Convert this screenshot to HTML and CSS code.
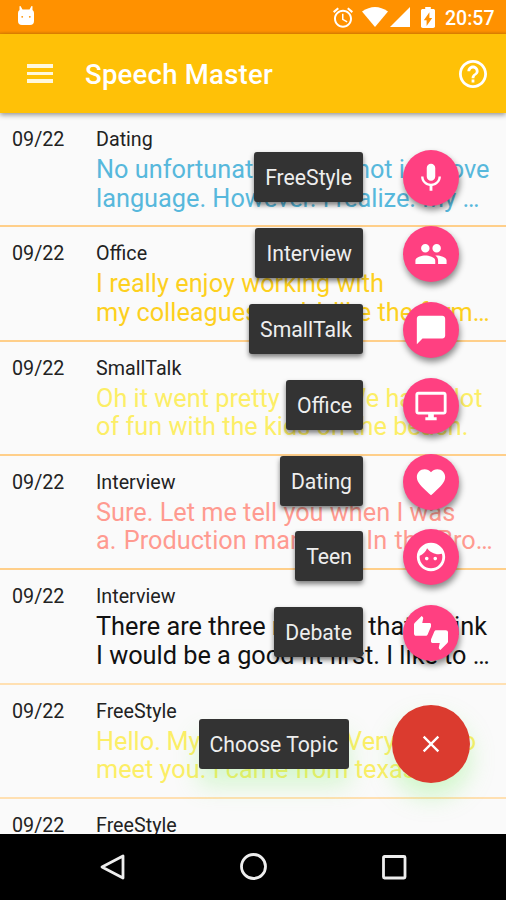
FILE: index.html
```html
<!DOCTYPE html>
<html lang="en">
<head>
<meta charset="utf-8">
<title>Speech Master</title>
<link rel="stylesheet" href="styles.css">
</head>
<body>
<div class="screen">
  <header class="status">
    <svg class="cat" viewBox="0 0 18 20"><path fill="#fff" d="M3.500 0 5.500 3.500h7L14.500 0l1 .3V4q1.500 1 1.500 3v8q0 4-4 4H5q-4 0-4-4V7q0-2 1.500-3V.3z"/><circle cx="5.200" cy="10.800" r=".9" fill="#ff9100"/><circle cx="12.800" cy="10.800" r=".9" fill="#ff9100"/></svg>
    <div class="status-icons">
      <svg class="alarm" viewBox="2 1.7 20 20.3"><path fill="#fff" d="M22 5.72l-4.6-3.86-1.29 1.53 4.6 3.86L22 5.72zM7.88 3.39L6.6 1.86 2 5.71l1.29 1.53 4.59-3.85zM12.5 8H11v6l4.75 2.85.75-1.23-4-2.37V8zM12 4c-4.97 0-9 4.03-9 9s4.02 9 9 9c4.97 0 9-4.03 9-9s-4.03-9-9-9zm0 16c-3.87 0-7-3.13-7-7s3.13-7 7-7 7 3.13 7 7-3.13 7-7 7z"/></svg>
      <svg class="wifi" viewBox="0 0 26 20"><path fill="#fff" d="M0 4.500Q13-4.500 26 4.500L13 20z"/></svg>
      <svg class="signal" viewBox="0 0 20 20"><path fill="#fff" d="M20 0v20H0z"/></svg>
      <svg class="battery" viewBox="7 2 10 20" preserveAspectRatio="none"><path fill="#fff" fill-rule="evenodd" d="M15.670 4H14V2h-4v2H8.330C7.600 4 7 4.600 7 5.330v15.330C7 21.400 7.600 22 8.330 22h7.330c.740 0 1.340-.600 1.340-1.330V5.330C17 4.600 16.400 4 15.670 4zM11 20v-5.500H9L13 7v5.500h2L11 20z"/></svg>
      <span class="clock">20:57</span>
    </div>
  </header>
  <nav class="toolbar">
    <div class="burger"><i></i><i></i><i></i></div>
    <h1>Speech Master</h1>
    <svg class="help" viewBox="2 2 20 20"><path fill="#fff" d="M11 18h2v-2h-2v2zm1-16C6.480 2 2 6.480 2 12s4.480 10 10 10 10-4.480 10-10S17.520 2 12 2zm0 18c-4.410 0-8-3.590-8-8s3.590-8 8-8 8 3.590 8 8-3.590 8-8 8zm0-14c-2.210 0-4 1.790-4 4h2c0-1.100.900-2 2-2s2 .900 2 2c0 2-3 1.750-3 5h2c0-2.250 3-2.500 3-5 0-2.210-1.790-4-4-4z"/></svg>
  </nav>
  <main class="list">
    <article class="row"><time>09/22</time><div><h2>Dating</h2><p class="blue"><span>No unfortunately, <em>I did </em>not improve</span><span>language. However. I realize. My …</span></p></div></article>
    <article class="row"><time>09/22</time><div><h2>Office</h2><p class="gold"><span>I really enjoy working with</span><span>my colleagues <em>and I </em>like the farm…</span></p></div></article>
    <article class="row"><time>09/22</time><div><h2>SmallTalk</h2><p class="yellow"><span>Oh it went pretty well. We had a lot</span><span>of fun with the kids on the beach.</span></p></div></article>
    <article class="row"><time>09/22</time><div><h2>Interview</h2><p class="coral"><span>Sure. Let me tell you when I was</span><span class="loose">a. Production manager. In the Bro…</span></p></div></article>
    <article class="row"><time>09/22</time><div><h2>Interview</h2><p class="dark"><span>There are three reasons that I think</span><span>I would be a good fit first. I like to …</span></p></div></article>
    <article class="row"><time>09/22</time><div><h2>FreeStyle</h2><p class="yellow"><span class="tight">Hello. My name is Jin. Very nice to</span><span>meet you. I came from texas.</span></p></div></article>
    <article class="row"><time>09/22</time><div><h2>FreeStyle</h2></div></article>
  </main>
  <aside class="menu">
    <div class="action"><span class="label">FreeStyle</span><button class="mini"><svg viewBox="0 0 24 24"><path d="M12 14c1.660 0 3-1.340 3-3V5c0-1.660-1.340-3-3-3S9 3.340 9 5v6c0 1.660 1.340 3 3 3zm5.300-3c0 3-2.540 5.100-5.300 5.100S6.700 14 6.700 11H5c0 3.410 2.720 6.230 6 6.720V21h2v-3.280c3.280-.480 6-3.300 6-6.720h-1.700z"/></svg></button></div>
    <div class="action"><span class="label">Interview</span><button class="mini"><svg viewBox="0 0 24 24"><path d="M16 11c1.660 0 2.990-1.340 2.990-3S17.660 5 16 5s-3 1.340-3 3 1.340 3 3 3zm-8 0c1.660 0 2.990-1.340 2.990-3S9.660 5 8 5 5 6.340 5 8s1.340 3 3 3zm0 2c-2.330 0-7 1.170-7 3.500V19h14v-2.500C15 14.170 10.330 13 8 13zm8 0c-.290 0-.620.020-.970.050 1.160.840 1.970 1.970 1.970 3.450V19h6v-2.500c0-2.330-4.670-3.500-7-3.500z"/></svg></button></div>
    <div class="action"><span class="label">SmallTalk</span><button class="mini"><svg viewBox="0 0 24 24"><path d="M20 2H4c-1.100 0-1.990.900-1.990 2L2 22l4-4h14c1.100 0 2-.900 2-2V4c0-1.100-.900-2-2-2z"/></svg></button></div>
    <div class="action"><span class="label">Office</span><button class="mini"><svg viewBox="0 0 24 24"><path d="M21 2H3c-1.100 0-2 .900-2 2v12c0 1.100.900 2 2 2h7v2H8v2h8v-2h-2v-2h7c1.100 0 2-.900 2-2V4c0-1.100-.900-2-2-2zm0 14H3V4h18v12z"/></svg></button></div>
    <div class="action"><span class="label">Dating</span><button class="mini"><svg viewBox="0 0 24 24"><path d="M12 21.350l-1.450-1.320C5.400 15.360 2 12.280 2 8.500 2 5.420 4.420 3 7.500 3c1.740 0 3.410.810 4.500 2.090C13.090 3.810 14.760 3 16.500 3 19.580 3 22 5.420 22 8.500c0 3.780-3.400 6.860-8.550 11.540L12 21.350z"/></svg></button></div>
    <div class="action"><span class="label">Teen</span><button class="mini"><svg viewBox="0 0 24 24"><path d="M9 11.750c-.690 0-1.250.560-1.250 1.250s.560 1.250 1.250 1.250 1.250-.560 1.250-1.250-.560-1.250-1.250-1.250zm6 0c-.690 0-1.250.560-1.250 1.250s.560 1.250 1.250 1.250 1.250-.560 1.250-1.250-.560-1.250-1.250-1.250zM12 2C6.480 2 2 6.480 2 12s4.480 10 10 10 10-4.480 10-10S17.520 2 12 2zm0 18c-4.410 0-8-3.590-8-8 0-.290.020-.580.050-.860 2.360-1.050 4.230-2.980 5.210-5.370C11.070 8.330 14.050 10 17.420 10c.780 0 1.530-.090 2.250-.260.210.710.330 1.470.330 2.260 0 4.410-3.590 8-8 8z"/></svg></button></div>
    <div class="action"><span class="label">Debate</span><button class="mini"><svg viewBox="0 0 24 24"><path d="M12 6c0-.550-.450-1-1-1H5.820l.660-3.180.020-.230c0-.310-.130-.590-.330-.800L5.380 0 .440 4.940C.170 5.210 0 5.590 0 6v6.500c0 .830.670 1.500 1.500 1.500h6.750c.620 0 1.150-.380 1.380-.910l2.260-5.290c.070-.170.110-.360.110-.550V6zm10.500 4h-6.750c-.620 0-1.150.380-1.380.910l-2.260 5.290c-.070.170-.110.360-.110.550V18c0 .550.450 1 1 1h5.180l-.660 3.180-.020.240c0 .310.130.590.330.800l.790.780 4.940-4.940c.270-.270.440-.650.440-1.060v-6.500c0-.830-.670-1.500-1.500-1.500z"/></svg></button></div>
    <div class="action main"><span class="label">Choose Topic</span><button class="close"><svg viewBox="0 0 24 24"><path d="M19 6.410L17.590 5 12 10.590 6.410 5 5 6.410 10.590 12 5 17.590 6.410 19 12 13.410 17.590 19 19 17.590 13.410 12z"/></svg></button></div>
  </aside>
  <footer class="navbar">
    <svg viewBox="0 0 28 28"><path d="M25 2v22L4 13z"/></svg>
    <svg viewBox="0 0 28 28"><circle cx="14.500" cy="12.500" r="12"/></svg>
    <svg viewBox="0 0 28 28"><rect x="3.500" y="2.500" width="21.500" height="21.500" rx="1"/></svg>
  </footer>
</div>
</body>
</html>
```
FILE: styles.css
```css
* { box-sizing: border-box; }
body { margin: 0; font-family: Roboto, "Liberation Sans", sans-serif; background: #fafafa; }
.screen { position: relative; display: flex; flex-direction: column; width: 506px; height: 900px; overflow: hidden; }
h1, h2, p { margin: 0; font-weight: 400; }
svg { display: block; flex: none; overflow: visible; }

.status { flex: none; height: 34px; background: linear-gradient(#ff9100 31px, #e78400); display: flex; justify-content: space-between; padding: 6px 11px 0 17px; }
.cat { width: 18px; height: 20px; }
.status-icons { display: flex; height: 22px; align-items: center; }
.alarm { width: 20px; height: 21px; margin-right: 9px; }
.wifi { width: 26px; height: 20px; margin-right: 2px; }
.signal { width: 20px; height: 20px; margin-right: 11px; }
.battery { width: 14px; height: 21px; margin-right: 10px; }
.clock { width: 50px; font-size: 19.500px; font-weight: 500; line-height: 24px; color: #fff; padding-top: 3px; }

.toolbar { flex: none; height: 79px; background: #ffc107; display: flex; align-items: center; padding: 0 19px 0 27px; box-shadow: 0 2px 5px rgba(0, 0, 0, .4); position: relative; color: #fff; }
.burger { width: 26px; display: grid; gap: 4px; }
.burger i { height: 3.500px; background: #fff8de; }
.toolbar h1 { margin-left: 32px; flex: 1; font-size: 27.500px; letter-spacing: .25px; font-weight: 500; line-height: 34px; padding-top: 3px; }
.help { width: 28px; height: 28px; }

.list { flex: none; height: 721px; overflow: hidden; }
.row { height: 114.330px; border-bottom: 2px solid #ffcf8a; display: flex; padding: 14px 0 0 12px; }
.row:nth-child(n+5) { border-color: #ffe0b2; }
.row time { width: 84px; font-size: 19.700px; line-height: 26px; color: #222; }
.row h2 { font-size: 19.700px; line-height: 26px; color: #222; }
.row p { padding-top: 3px; font-size: 25.300px; line-height: 28.500px; }
.row p span { display: block; white-space: nowrap; }
.row em { font-style: normal; word-spacing: 3.500px; }
.loose { word-spacing: 1px; }
.tight { word-spacing: -.7px; }
.blue { color: #57b8dc; }
.gold { color: #fdd01f; }
.yellow { color: #fcee66; }
.coral { color: #ff9a90; }
.dark { color: #111; }

.menu { position: absolute; top: 150px; right: 36px; display: flex; flex-direction: column; gap: 19.900px; }
.action { display: flex; justify-content: flex-end; align-items: center; height: 56px; padding-right: 11px; }
.label { height: 50px; line-height: 52px; margin: 0 40px 2px 0; padding: 0 11px; border-radius: 3px; background: #333; color: #eee; font-size: 21.200px; box-shadow: 0 3px 5px rgba(0, 0, 0, .5); }
button { border: 0; padding: 0; border-radius: 50%; display: flex; align-items: center; justify-content: center; flex: none; }
button svg { fill: #fff; }
.mini { width: 56px; height: 56px; background: #ff4081; box-shadow: 1px 4px 6px rgba(0, 0, 0, .45); }
.mini svg { width: 34px; height: 34px; }
.main { height: 78px; padding: 0; margin-top: 24px; }
.main .label { margin: 0 43px 0 0; box-shadow: 0 16px 24px rgba(130, 240, 110, .3); }
.close { width: 78px; height: 78px; background: #db3b2f; box-shadow: 0 14px 24px rgba(130, 240, 110, .35); }
.close svg { width: 28px; height: 28px; }

.navbar { flex: none; height: 67px; background: #000; display: flex; justify-content: center; align-items: center; gap: 113px; }
.navbar svg { width: 28px; height: 28px; fill: none; stroke: #eee; stroke-width: 2.800; stroke-linejoin: round; }
```
